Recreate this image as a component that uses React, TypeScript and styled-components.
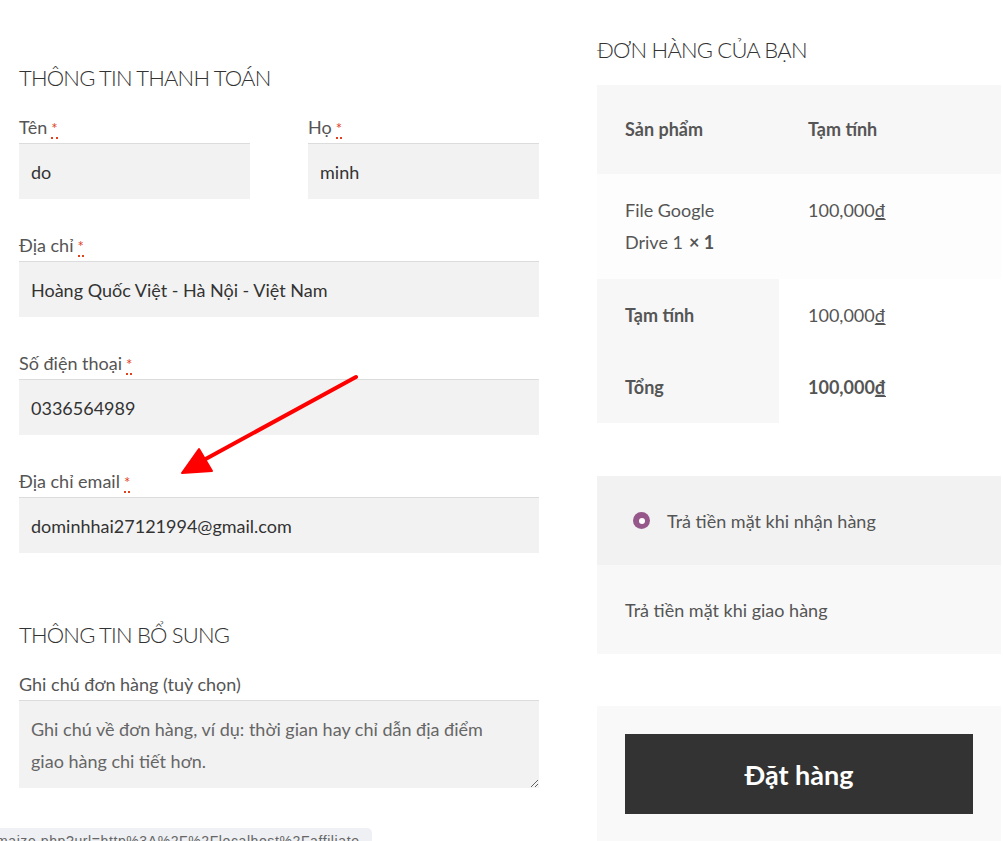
import React from "react";
import styled, { createGlobalStyle } from "styled-components";

const GlobalStyle = createGlobalStyle`
  * { box-sizing: border-box; }
  body {
    margin: 0;
    background: #fff;
    font-family: Lato, "Open Sans", sans-serif;
    color: #555;
  }
`;

const Page = styled.div`
  display: flex;
  gap: 58px;
  padding-left: 19px;
  position: relative;
  min-height: 841px;
`;

const LeftColumn = styled.div`
  width: 520px;
  padding-top: 60px;
`;

const RightColumn = styled.div`
  width: 404px;
  padding-top: 32px;
`;

const SectionTitle = styled.h3<{ $top?: number }>`
  margin: ${(p) => p.$top ?? 0}px 0 17px;
  font-size: 22px;
  line-height: 36px;
  font-weight: 300;
  color: #333;
  text-transform: uppercase;
  letter-spacing: -0.8px;
`;

const FieldRow = styled.div`
  display: flex;
  justify-content: space-between;
`;

const Field = styled.div<{ $width?: number }>`
  width: ${(p) => (p.$width ? `${p.$width}px` : "100%")};
  margin-bottom: 32px;
`;

const Label = styled.label`
  display: block;
  height: 28px;
  font-size: 18px;
  line-height: 28px;
  margin-bottom: 2px;
  color: #555;
`;

const Required = styled.abbr`
  color: #e2401c;
  text-decoration: none;
  border-bottom: 2px dotted #e2401c;
  font-size: 15px;
  line-height: 1;
  margin-left: 4px;
  cursor: help;
`;

const Input = styled.input`
  display: block;
  width: 100%;
  height: 56px;
  border: 0;
  border-top: 1px solid #dcdcdc;
  background: #f2f2f2;
  padding: 0 12px;
  font-family: inherit;
  font-size: 18px;
  color: #333;
  outline: none;
`;

const TextArea = styled.textarea`
  display: block;
  width: 100%;
  height: 88px;
  border: 0;
  border-top: 1px solid #dcdcdc;
  background: #f2f2f2;
  padding: 12px 40px 0 12px;
  font-family: inherit;
  font-size: 18px;
  line-height: 32px;
  color: #333;
  resize: vertical;
  outline: none;
  &::placeholder {
    color: #666;
  }
`;

const OrderTable = styled.div`
  display: grid;
  grid-template-columns: 182px 1fr;
  font-size: 18px;
`;

const Cell = styled.div<{ $bg: string; $bold?: boolean; $pad: string }>`
  background: ${(p) => p.$bg};
  padding: ${(p) => p.$pad};
  font-weight: ${(p) => (p.$bold ? 700 : 400)};
  line-height: 32px;
  color: #555;
`;

const Qty = styled.strong`
  margin-left: 6px;
  font-weight: 700;
`;

const Currency = styled.span`
  text-decoration: underline;
  text-underline-offset: 2px;
`;

const PaymentBox = styled.div`
  margin-top: 53px;
  font-size: 18px;
`;

const PaymentMethod = styled.div`
  height: 89px;
  background: #f2f2f2;
  display: flex;
  align-items: center;
  padding-left: 36px;
  gap: 17px;
  color: #555;
`;

const Radio = styled.span`
  width: 17px;
  height: 17px;
  border-radius: 50%;
  background: #96588a;
  display: flex;
  align-items: center;
  justify-content: center;
  &::after {
    content: "";
    width: 6px;
    height: 6px;
    border-radius: 50%;
    background: #fff;
  }
`;

const PaymentDesc = styled.div`
  height: 89px;
  background: #f8f8f8;
  display: flex;
  align-items: center;
  padding-left: 28px;
  color: #555;
`;

const PlaceOrderBox = styled.div`
  margin-top: 52px;
  background: #f9f9f9;
  padding: 28px 28px 40px;
`;

const PlaceOrderButton = styled.button`
  display: block;
  width: 100%;
  height: 80px;
  border: 0;
  background: #333;
  color: #fff;
  font-family: inherit;
  font-size: 27px;
  font-weight: 700;
  cursor: pointer;
`;

const Annotation = styled.svg`
  position: absolute;
  left: 0;
  top: 0;
  pointer-events: none;
`;

const StatusBar = styled.div`
  position: fixed;
  left: 0;
  bottom: -12px;
  width: 372px;
  height: 25px;
  background: #eef0f3;
  border-top-right-radius: 5px;
  font-family: "Liberation Sans", Arial, sans-serif;
  font-size: 14px;
  line-height: 26px;
  letter-spacing: 0.6px;
  color: #666;
  white-space: nowrap;
  overflow: hidden;
  text-indent: -4px;
`;

export default function App() {
  return (
    <>
      <GlobalStyle />
      <Page>
        <LeftColumn>
          <SectionTitle>Thông tin thanh toán</SectionTitle>
          <FieldRow>
            <Field $width={231}>
              <Label>
                Tên<Required title="bắt buộc">*</Required>
              </Label>
              <Input defaultValue="do" />
            </Field>
            <Field $width={231}>
              <Label>
                Họ<Required title="bắt buộc">*</Required>
              </Label>
              <Input defaultValue="minh" />
            </Field>
          </FieldRow>
          <Field>
            <Label>
              Địa chỉ<Required title="bắt buộc">*</Required>
            </Label>
            <Input defaultValue="Hoàng Quốc Việt - Hà Nội - Việt Nam" />
          </Field>
          <Field>
            <Label>
              Số điện thoại<Required title="bắt buộc">*</Required>
            </Label>
            <Input defaultValue="0336564989" />
          </Field>
          <Field>
            <Label>
              Địa chỉ email<Required title="bắt buộc">*</Required>
            </Label>
            <Input defaultValue="dominhhai27121994@gmail.com" />
          </Field>

          <SectionTitle $top={64}>Thông tin bổ sung</SectionTitle>
          <Label>Ghi chú đơn hàng (tuỳ chọn)</Label>
          <TextArea placeholder="Ghi chú về đơn hàng, ví dụ: thời gian hay chỉ dẫn địa điểm giao hàng chi tiết hơn." />
        </LeftColumn>

        <RightColumn>
          <SectionTitle>Đơn hàng của bạn</SectionTitle>
          <OrderTable>
            <Cell $bg="#f7f7f7" $bold $pad="28px 0 29px 28px">
              Sản phẩm
            </Cell>
            <Cell $bg="#f7f7f7" $bold $pad="28px 0 29px 29px">
              Tạm tính
            </Cell>
            <Cell $bg="#fdfdfd" $pad="20px 20px 21px 28px">
              File Google Drive 1<Qty>× 1</Qty>
            </Cell>
            <Cell $bg="#fdfdfd" $pad="20px 0 21px 29px">
              100,000<Currency>₫</Currency>
            </Cell>
            <Cell $bg="#f7f7f7" $bold $pad="20px 0 20px 28px">
              Tạm tính
            </Cell>
            <Cell $bg="#fff" $pad="20px 0 20px 29px">
              100,000<Currency>₫</Currency>
            </Cell>
            <Cell $bg="#f7f7f7" $bold $pad="20px 0 20px 28px">
              Tổng
            </Cell>
            <Cell $bg="#fff" $bold $pad="20px 0 20px 29px">
              100,000<Currency>₫</Currency>
            </Cell>
          </OrderTable>

          <PaymentBox>
            <PaymentMethod>
              <Radio />
              Trả tiền mặt khi nhận hàng
            </PaymentMethod>
            <PaymentDesc>Trả tiền mặt khi giao hàng</PaymentDesc>
          </PaymentBox>

          <PlaceOrderBox>
            <PlaceOrderButton>Đặt hàng</PlaceOrderButton>
          </PlaceOrderBox>
        </RightColumn>

        <Annotation width="1003" height="841" viewBox="0 0 1003 841">
          <line
            x1="356"
            y1="377"
            x2="202"
            y2="461"
            stroke="#ff0000"
            strokeWidth="4"
            strokeLinecap="round"
          />
          <polygon
            points="199,449 212,471 182,473"
            fill="#ff0000"
            stroke="#ff0000"
            strokeWidth="2"
            strokeLinejoin="round"
          />
        </Annotation>
      </Page>
      <StatusBar>maize.php?url=http%3A%2F%2Flocalhost%2Faffiliate</StatusBar>
    </>
  );
}
